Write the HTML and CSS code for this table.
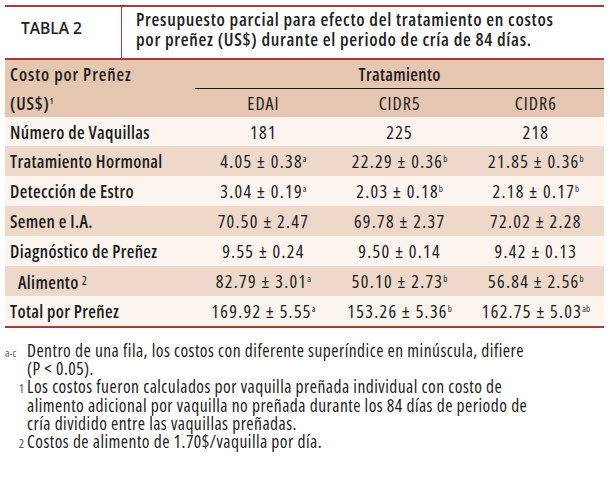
FILE: index.html
```html
<!DOCTYPE html>
<html lang="es">
<head>
<meta charset="utf-8">
<link rel="stylesheet" href="styles.css">
</head>
<body>
<div class="page">
  <div class="caption">
    <div class="cap-label">TABLA 2</div>
    <div class="cap-title">Presupuesto parcial para efecto del tratamiento en costos<br>por preñez (US$) durante el periodo de cría de 84 días.</div>
  </div>
  <table class="data">
    <colgroup>
      <col class="c-label"><col class="c-val"><col class="c-val"><col class="c-val">
    </colgroup>
    <thead>
      <tr class="h1">
        <th class="lbl">Costo por Preñez</th>
        <th colspan="3" class="group">Tratamiento</th>
      </tr>
      <tr class="h2">
        <th class="lbl">(US$)<sup class="tiny">1</sup></th>
        <th>EDAI</th><th>CIDR5</th><th>CIDR6</th>
      </tr>
    </thead>
    <tbody>
      <tr class="light"><td class="lbl">Número de Vaquillas</td><td>181</td><td>225</td><td>218</td></tr>
      <tr class="tan"><td class="lbl">Tratamiento Hormonal</td><td>4.05 ± 0.38<sup>a</sup></td><td>22.29 ± 0.36<sup>b</sup></td><td>21.85 ± 0.36<sup>b</sup></td></tr>
      <tr class="light"><td class="lbl">Detección de Estro</td><td>3.04 ± 0.19<sup>a</sup></td><td>2.03 ± 0.18<sup>b</sup></td><td>2.18 ± 0.17<sup>b</sup></td></tr>
      <tr class="tan"><td class="lbl">Semen e I.A.</td><td>70.50 ± 2.47</td><td>69.78 ± 2.37</td><td>72.02 ± 2.28</td></tr>
      <tr class="light"><td class="lbl">Diagnóstico de Preñez</td><td>9.55 ± 0.24</td><td>9.50 ± 0.14</td><td>9.42 ± 0.13</td></tr>
      <tr class="tan"><td class="lbl indent">Alimento<span class="fn">2</span></td><td>82.79 ± 3.01<sup>a</sup></td><td>50.10 ± 2.73<sup>b</sup></td><td>56.84 ± 2.56<sup>b</sup></td></tr>
      <tr class="light"><td class="lbl">Total por Preñez</td><td>169.92 ± 5.55<sup>a</sup></td><td>153.26 ± 5.36<sup>b</sup></td><td>162.75 ± 5.03<sup>ab</sup></td></tr>
    </tbody>
  </table>
  <div class="notes">
    <div class="note"><span class="mark">a-c</span><span class="ntext">Dentro de una fila, los costos con diferente superíndice en minúscula, difiere<br>(P &lt; 0.05).</span></div>
    <div class="note"><span class="mark num">1</span><span class="ntext">Los costos fueron calculados por vaquilla preñada individual con costo de<br>alimento adicional por vaquilla no preñada durante los 84 días de periodo de<br>cría dividido entre las vaquillas preñadas.</span></div>
    <div class="note"><span class="mark num">2</span><span class="ntext">Costos de alimento de 1.70$/vaquilla por día.</span></div>
  </div>
</div>
</body>
</html>
```
FILE: styles.css
```css
html, body {
  margin: 0;
  padding: 0;
  background: #ffffff;
}
body {
  font-family: "Open Sans", "Liberation Sans", sans-serif;
  font-stretch: condensed;
  color: #1c1c1c;
}
.page {
  padding: 5px 6px 0 5px;
  width: 599px;
}
.caption {
  display: flex;
  border-top: 2px solid #a8383c;
  height: 51px;
}
.cap-label {
  width: 117px;
  border-right: 1.5px solid #a8383c;
  padding-left: 16px;
  padding-top: 11px;
  box-sizing: border-box;
  font-size: 15.5px;
  line-height: 20px;
  font-weight: 600;
  font-stretch: normal;
  color: #222;
}
.cap-title {
  padding-left: 14px;
  padding-top: 2px;
  font-size: 18px;
  line-height: 20px;
  font-weight: 600;
  letter-spacing: 0.7px;
  color: #222;
}
.data {
  width: 599px;
  border-collapse: collapse;
  border-top: 2px solid #a8383c;
  border-bottom: 2px solid #a8383c;
  font-size: 18px;
  line-height: 20px;
  letter-spacing: 1.3px;
}
.c-label { width: 190px; }
.c-val { width: 136px; }
.data th, .data td {
  padding: 0;
  text-align: center;
  white-space: nowrap;
}
.data thead tr { background: #e5c6b1; }
.data th {
  font-weight: 400;
  height: 28px;
  letter-spacing: 1px;
}
.data th.group {
  font-weight: 600;
  font-size: 17.5px;
  letter-spacing: 0.35px;
  border-bottom: 1.5px solid #1a1a1a;
}
.data th.lbl, .data td.lbl {
  text-align: left;
  padding-left: 5px;
  font-weight: 600;
  font-size: 17.5px;
}
.data th.lbl { letter-spacing: 0.9px; }
.data td.lbl { letter-spacing: 0.35px; }
.data td.indent { padding-left: 13px; }
.data td { height: 30px; }
.data tbody tr:first-child td { height: 29px; }
.light { background: #fbf4ef; }
.tan { background: #eed8ca; }
sup {
  font-size: 9px;
  vertical-align: 6px;
  line-height: 0;
  letter-spacing: 0;
}
sup.tiny { font-size: 8px; }
.fn {
  font-size: 12px;
  font-weight: 400;
  vertical-align: 4px;
  margin-left: 3px;
  letter-spacing: 0;
}
.notes {
  padding-top: 13px;
  font-size: 17.5px;
  line-height: 18.2px;
  letter-spacing: 0.47px;
  color: #1c1c1c;
}
.note {
  display: flex;
  align-items: flex-start;
}
.mark {
  width: 22px;
  flex: none;
  font-size: 11px;
  letter-spacing: 0;
  color: #555;
  padding-top: 3px;
}
.mark.num {
  text-align: right;
  padding-right: 3px;
  box-sizing: border-box;
  font-size: 12.5px;
}
.ntext { display: block; }
```
